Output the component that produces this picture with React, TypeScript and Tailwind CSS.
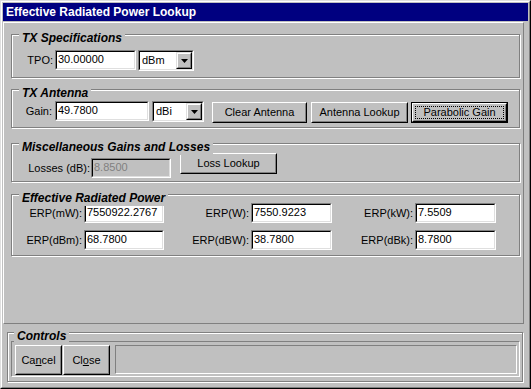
import { ReactNode } from "react";

const face = "font-['Liberation_Sans',Arial,sans-serif]";

function Field({ value, w, disabled }: { value: string; w: string; disabled?: boolean }) {
  return (
    <div className={`${w} h-[20px] shrink-0 border border-[#808080] border-b-white border-r-white`}>
      <div
        className={`h-full border border-black border-b-[#dfdfdf] border-r-[#dfdfdf] pl-[1px] text-[11px] leading-[15px] ${
          disabled ? "bg-[#c0c0c0] text-[#808080]" : "bg-white text-black"
        }`}
      >
        {value}
      </div>
    </div>
  );
}

function Combo({ value, w }: { value: string; w: string }) {
  return (
    <div className={`${w} h-[21px] shrink-0 border border-[#808080] border-b-white border-r-white`}>
      <div className="h-full flex border border-black border-b-[#dfdfdf] border-r-[#dfdfdf] bg-white">
        <span className="flex-1 pl-[2px] text-[11px] leading-[16px]">{value}</span>
        <div className="w-[16px] h-full border border-[#dfdfdf] border-b-black border-r-black bg-[#c0c0c0]">
          <div className="h-full flex items-center justify-center border border-white border-b-[#808080] border-r-[#808080]">
            <svg width="7" height="4" viewBox="0 0 7 4">
              <path d="M0 0h7L3.5 4z" fill="#000" />
            </svg>
          </div>
        </div>
      </div>
    </div>
  );
}

function Btn({ children, className, isDefault }: { children: ReactNode; className: string; isDefault?: boolean }) {
  return (
    <div className={`${className} shrink-0 bg-[#c0c0c0] ${isDefault ? "border border-black" : ""}`}>
      <div className="h-full border border-white border-b-black border-r-black">
        <div
          className={`h-full flex items-center justify-center border border-[#c0c0c0] border-b-[#808080] border-r-[#808080] text-[11px] ${
            isDefault ? "p-[1px]" : ""
          }`}
        >
          {isDefault ? (
            <div className="w-full h-full flex items-center justify-center border border-dotted border-black">
              {children}
            </div>
          ) : (
            children
          )}
        </div>
      </div>
    </div>
  );
}

function Group({ title, className, children, titleLeft = "left-[7px]" }: { title: string; className: string; children?: ReactNode; titleLeft?: string }) {
  return (
    <div className={`relative shrink-0 border border-[#808080] shadow-[inset_1px_1px_0_#fff,1px_1px_0_#fff] ${className}`}>
      <span className={`absolute ${titleLeft} -top-[5px] bg-[#c0c0c0] px-[3px] text-[12px] font-bold italic leading-[16px]`}>
        {title}
      </span>
      {children}
    </div>
  );
}

function Label({ text, w }: { text: string; w: string }) {
  return <span className={`${w} shrink-0 text-right text-[11px] leading-[20px]`}>{text}</span>;
}

const erp = [
  [
    ["ERP(mW):", "7550922.2767"],
    ["ERP(W):", "7550.9223"],
    ["ERP(kW):", "7.5509"],
  ],
  [
    ["ERP(dBm):", "68.7800"],
    ["ERP(dBW):", "38.7800"],
    ["ERP(dBk):", "8.7800"],
  ],
];

export default function App() {
  return (
    <div className={`${face} w-[531px] h-[389px] bg-[#c0c0c0] text-black border border-[#dfdfdf] border-b-black border-r-black`}>
      <div className="h-full border border-white border-b-[#808080] border-r-[#808080] p-[1px] flex flex-col">
        {/* Title */}
        <div className="h-[18px] shrink-0 bg-[#000080] text-white font-bold text-[12px] leading-[18px] pl-[3px]">
          Effective Radiated Power Lookup
        </div>

        {/* Main panel */}
        <div className="mt-[1px] w-[521px] h-[302px] shrink-0 border border-white border-b-[#808080] border-r-[#808080] pl-[7px] pt-[11px] flex flex-col">
          <Group title="TX Specifications" className="w-[509px] h-[44px]">
            <div className="flex items-start pt-[15px]">
              <Label text="TPO:" w="w-[41px]" />
              <div className="ml-[2px]">
                <Field value="30.00000" w="w-[81px]" />
              </div>
              <div className="ml-[2px]">
                <Combo value="dBm" w="w-[56px]" />
              </div>
            </div>
          </Group>

          <Group title="TX Antenna" className="mt-[11px] w-[509px] h-[39px]">
            <div className="flex items-start pt-[11px]">
              <Label text="Gain:" w="w-[40px]" />
              <div className="ml-[3px]">
                <Field value="49.7800" w="w-[94px]" />
              </div>
              <div className="ml-[3px]">
                <Combo value="dBi" w="w-[52px]" />
              </div>
              <Btn className="ml-[8px] mt-[1px] w-[95px] h-[21px]">Clear Antenna</Btn>
              <Btn className="ml-[4px] mt-[1px] w-[97px] h-[21px]">Antenna Lookup</Btn>
              <Btn className="ml-[3px] mt-[1px] w-[97px] h-[21px]" isDefault>
                Parabolic Gain
              </Btn>
            </div>
          </Group>

          <Group title="Miscellaneous Gains and Losses" className="mt-[15px] w-[509px] h-[39px]">
            <div className="flex items-start pt-[9px]">
              <div className="flex items-center mt-[5px]">
                <Label text="Losses (dB):" w="w-[78px]" />
                <div className="ml-[1px]">
                  <Field value="8.8500" w="w-[80px]" disabled />
                </div>
              </div>
              <Btn className="ml-[9px] w-[97px] h-[21px]">Loss Lookup</Btn>
            </div>
          </Group>

          <Group title="Effective Radiated Power" className="mt-[12px] w-[509px] h-[62px]">
            <div className="pt-[8px] flex flex-col gap-[7px]">
              {erp.map((row, i) => (
                <div key={i} className="grid grid-cols-[152px_168px_164px]">
                  {row.map(([label, value], j) => (
                    <div key={j} className="flex items-center justify-end gap-[2px]">
                      <span className="text-[11px] leading-[20px]">{label}</span>
                      <Field value={value} w={j === 0 ? "w-[80px]" : "w-[81px]"} />
                    </div>
                  ))}
                </div>
              ))}
            </div>
          </Group>
        </div>

        {/* Controls */}
        <Group title="Controls" titleLeft="left-[6px]" className="mt-[8px] ml-[4px] w-[516px] h-[50px]">
          <div className="ml-[3px] mt-[8px] w-[509px] h-[36px] border border-[#808080] border-b-white border-r-white flex items-start pl-[3px] pt-[3px]">
            <Btn className="w-[47px] h-[30px]">
              <span>
                Ca<span className="underline">n</span>cel
              </span>
            </Btn>
            <Btn className="ml-[1px] w-[47px] h-[30px]">
              <span>
                Cl<span className="underline">o</span>se
              </span>
            </Btn>
            <div className="ml-[5px] w-[402px] h-[29px] border border-[#808080] border-b-white border-r-white" />
          </div>
        </Group>
      </div>
    </div>
  );
}
